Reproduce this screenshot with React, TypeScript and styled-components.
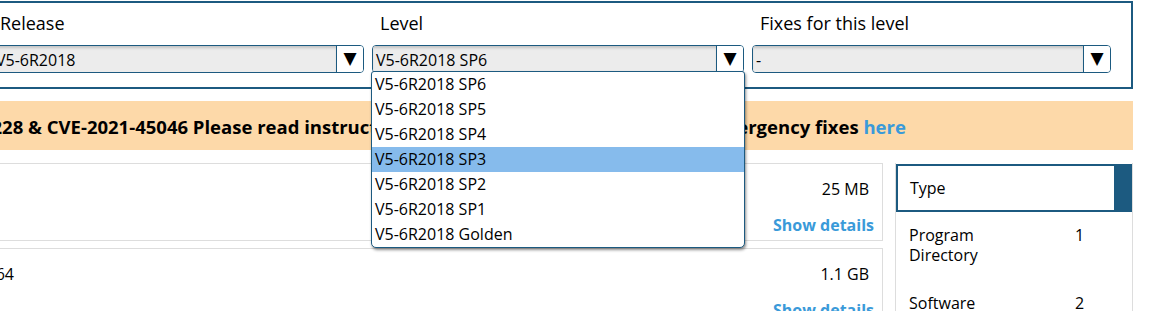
import { ReactElement } from 'react';

import styled, { createGlobalStyle } from 'styled-components';

const BLUE = '#1c5a80';
const LINK = '#3a9ad9';

const levels = [
  'V5-6R2018 SP6',
  'V5-6R2018 SP5',
  'V5-6R2018 SP4',
  'V5-6R2018 SP3',
  'V5-6R2018 SP2',
  'V5-6R2018 SP1',
  'V5-6R2018 Golden',
];

interface ISelectProps {
  value: string;
}

function Select({ value }: ISelectProps): ReactElement {
  return (
    <SelectBox>
      <SelectValue>{value}</SelectValue>
      <SelectArrow>▼</SelectArrow>
    </SelectBox>
  );
}

interface ICardProps {
  title: string;
  size: string;
}

function DownloadCard({ title, size }: ICardProps): ReactElement {
  return (
    <Card>
      <CardTitle>{title}</CardTitle>
      <CardSide>
        <CardSize>{size}</CardSize>
        <DetailsLink href="#">Show details</DetailsLink>
      </CardSide>
    </Card>
  );
}

function App(): ReactElement {
  return (
    <Page>
      <GlobalStyle />
      <FilterPanel>
        <FilterColumn>
          <FilterLabel>Release</FilterLabel>
          <Select value="V5-6R2018" />
        </FilterColumn>
        <FilterColumn>
          <FilterLabel>Level</FilterLabel>
          <Select value="V5-6R2018 SP6" />
          <DropdownList>
            {levels.map((level) => (
              <DropdownItem key={level} $active={level === 'V5-6R2018 SP3'}>
                {level}
              </DropdownItem>
            ))}
          </DropdownList>
        </FilterColumn>
        <FilterColumn>
          <FilterLabel>Fixes for this level</FilterLabel>
          <Select value="-" />
        </FilterColumn>
      </FilterPanel>

      <Banner>
        <BannerText>
          CVE-2021-44228 &amp; CVE-2021-45046 Please read instructions on how to
          fetch and install the emergency fixes <a href="#">here</a>
        </BannerText>
      </Banner>

      <Content>
        <CardList>
          <DownloadCard title="" size="25 MB" />
          <DownloadCard title="Win64" size="1.1 GB" />
        </CardList>
        <TypePanel>
          <TypeHeader>
            <TypeHeading>Type</TypeHeading>
            <TypeBar />
          </TypeHeader>
          <TypeRow>
            <span>
              Program
              <br />
              Directory
            </span>
            <span>1</span>
          </TypeRow>
          <TypeRow>
            <span>Software</span>
            <span>2</span>
          </TypeRow>
        </TypePanel>
      </Content>
    </Page>
  );
}

const GlobalStyle = createGlobalStyle`
  body {
    margin: 0;
    overflow: hidden;
    background: #fff;
    color: #000;
    font-family: "Open Sans", "Noto Sans", sans-serif;
  }
`;

const Page = styled.div`
  width: 1145px;
  margin-left: -12px;
  padding-top: 1px;
`;

const FilterPanel = styled.div`
  display: grid;
  grid-template-columns: 380px 380px 1fr;
  padding: 9px 12px 14px 2px;
  border: 2px solid ${BLUE};
`;

const FilterColumn = styled.div`
  position: relative;
  display: flex;
  flex-direction: column;
  gap: 10px;
`;

const FilterLabel = styled.div`
  padding-left: 8px;
  font-size: 18px;
  line-height: 23px;
`;

const SelectBox = styled.div`
  display: flex;
  height: 28px;
  margin-right: 8px;
  border: 1px solid ${BLUE};
  border-radius: 4px;
  overflow: hidden;
  box-sizing: border-box;
`;

const SelectValue = styled.div`
  flex: 1;
  padding-left: 3px;
  background: #ececec;
  box-shadow: inset 0 3px 3px -1px rgba(0, 0, 0, 0.18);
  font-size: 16px;
  line-height: 29px;
  white-space: nowrap;
`;

const SelectArrow = styled.div`
  width: 26px;
  border-left: 1px solid ${BLUE};
  background: #fff;
  font-family: "DejaVu Sans", sans-serif;
  font-size: 17px;
  line-height: 24px;
  text-align: center;
`;

const DropdownList = styled.ul`
  position: absolute;
  top: 59px;
  left: -1px;
  width: 374px;
  margin: 0;
  padding: 0;
  list-style: none;
  background: #fff;
  border: 1px solid ${BLUE};
  border-radius: 3px 3px 5px 5px;
  box-shadow: 1px 2px 3px rgba(0, 0, 0, 0.45);
  box-sizing: border-box;
  z-index: 2;
`;

const DropdownItem = styled.li<{ $active?: boolean }>`
  height: 25px;
  padding-left: 3px;
  font-size: 16px;
  line-height: 25px;
  background: ${(p) => (p.$active ? '#86bbec' : 'transparent')};
`;

const Banner = styled.div`
  height: 49px;
  margin-top: 12px;
  padding-left: 12px;
  background: #fdd9a9;
  overflow: hidden;
`;

const BannerText = styled.div`
  margin-left: -118px;
  padding-top: 14px;
  font-size: 18.5px;
  font-weight: 700;
  line-height: 24px;
  white-space: nowrap;

  a {
    color: ${LINK};
    text-decoration: none;
  }
`;

const Content = styled.div`
  display: flex;
  gap: 12px;
  margin-top: 13px;
`;

const CardList = styled.div`
  display: flex;
  flex: 1;
  flex-direction: column;
  gap: 7px;
`;

const Card = styled.div`
  display: flex;
  justify-content: space-between;
  height: 78px;
  border: 1px solid #ddd;
  box-sizing: border-box;
`;

const CardTitle = styled.div`
  margin-left: -22px;
  padding-top: 14px;
  font-size: 16px;
  line-height: 22px;
`;

const CardSide = styled.div`
  display: flex;
  flex-direction: column;
  align-items: flex-end;
  gap: 14px;
  padding: 14px 8px 0 0;
`;

const CardSize = styled.div`
  padding-right: 5px;
  font-size: 16px;
  line-height: 22px;
`;

const DetailsLink = styled.a`
  color: ${LINK};
  font-size: 16px;
  font-weight: 700;
  line-height: 22px;
  text-decoration: none;
`;

const TypePanel = styled.div`
  width: 238px;
  height: 160px;
  border-left: 1px solid #ddd;
  border-right: 1px solid #ddd;
  box-sizing: border-box;
`;

const TypeHeader = styled.div`
  display: flex;
  height: 48px;
  margin-top: 1px;
`;

const TypeHeading = styled.div`
  flex: 1;
  padding-left: 12px;
  border: 2px solid ${BLUE};
  font-size: 16px;
  line-height: 44px;
`;

const TypeBar = styled.div`
  width: 16px;
  background: ${BLUE};
`;

const TypeRow = styled.div`
  display: grid;
  grid-template-columns: 166px 1fr;
  padding: 13px 0 15px 13px;
  font-size: 16px;
  line-height: 20px;
`;

export default App;
